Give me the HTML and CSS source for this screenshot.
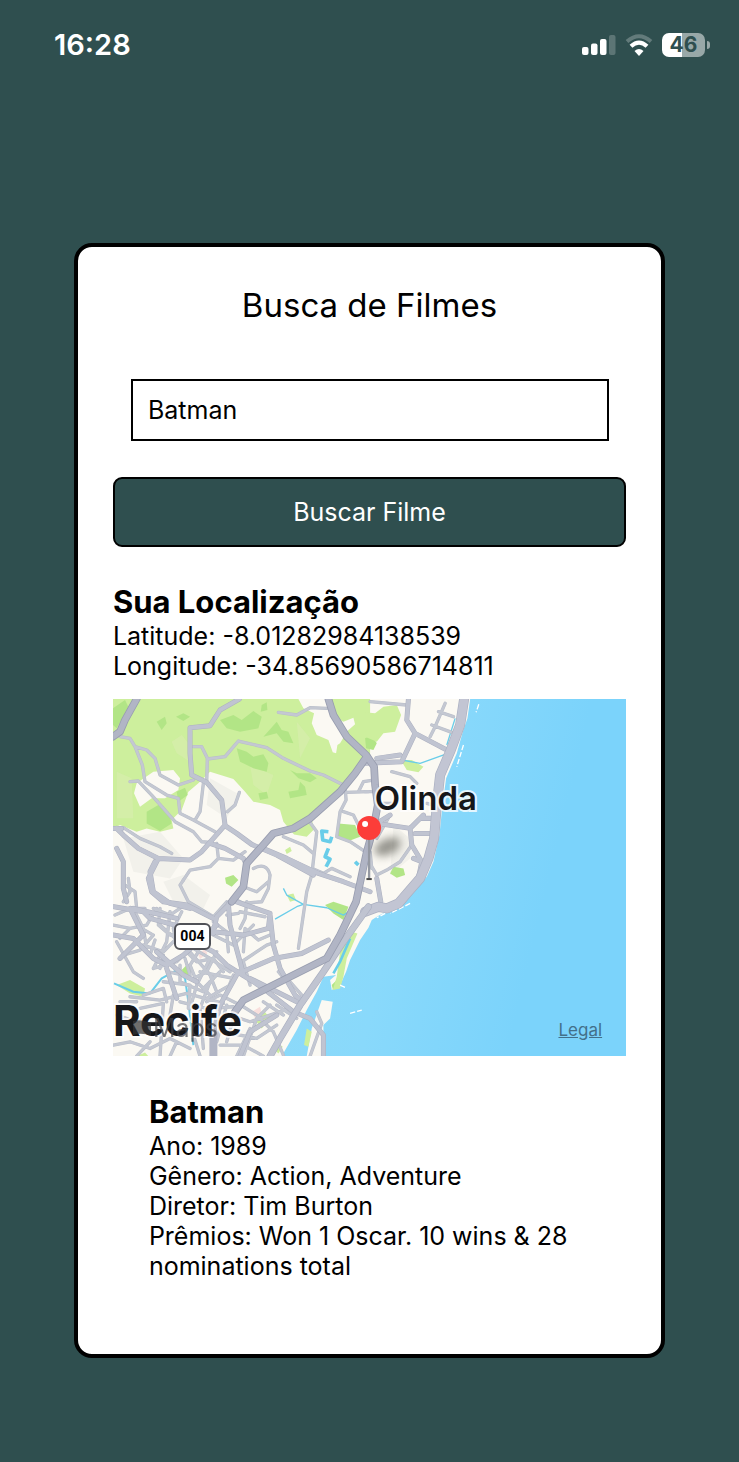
FILE: index.html
```html
<!DOCTYPE html>
<html lang="pt-BR">
<head>
<meta charset="utf-8">
<meta name="viewport" content="width=device-width, initial-scale=1">
<title>Busca de Filmes</title>
<link rel="stylesheet" href="styles.css">
</head>
<body>
<header class="status">
  <span class="clock">16:28</span>
  <div class="indicators">
    <svg class="signal" viewBox="0 0 34 20" aria-hidden="true">
      <rect x="0" y="12" width="6.500" height="8" rx="2" fill="#fff"/>
      <rect x="9" y="8.500" width="6.500" height="11.500" rx="2" fill="#fff"/>
      <rect x="18" y="4" width="6.500" height="16" rx="2" fill="#fff"/>
      <rect x="27" y="0" width="6.500" height="20" rx="2" fill="#fff" opacity=".22"/>
    </svg>
    <svg class="wifi" viewBox="0 0 28 22" aria-hidden="true">
      <path d="M2 7.500Q14-3 26 7.500" fill="none" stroke="#fff" stroke-width="4" opacity=".25"/>
      <path d="M6 12.200Q14 5 22 12.200" fill="none" stroke="#fff" stroke-width="4.200"/>
      <path d="M9.500 17Q14 13 18.500 17L14 22Z" fill="#fff"/>
    </svg>
    <div class="battery"><span class="level">46</span><i class="nub"></i></div>
  </div>
</header>
<main class="card">
  <h1 class="title">Busca de Filmes</h1>
  <form class="search">
    <input class="field" type="text" value="Batman" aria-label="Nome do filme">
    <button class="submit" type="button">Buscar Filme</button>
  </form>
  <section class="location">
    <h2 class="heading">Sua Localização</h2>
    <p>Latitude: -8.01282984138539</p>
    <p>Longitude: -34.85690586714811</p>
  </section>
  <div class="map">
    <svg class="tiles" viewBox="9 12 1539 1071" preserveAspectRatio="xMidYMid slice" aria-hidden="true">
      <defs>
        <linearGradient id="sea" x1="0" y1="0" x2="1" y2=".25">
          <stop offset="0" stop-color="#8fdaf8"/><stop offset=".45" stop-color="#89d9fb"/><stop offset=".85" stop-color="#7bd3fb"/>
        </linearGradient>
        <filter id="soft" x="-50%" y="-50%" width="200%" height="200%"><feGaussianBlur stdDeviation="13"/></filter>
        <g id="minor">
          <path d="M30 125L60 130 75 155 110 165 135 190 150 240 205 270 250 255M75 155L97 210 105 260 170 300 205 310 210 355 250 375 315 410M60 260L85 258 125 300 160 340 195 380 250 410 275 440 300 442"/>
          <path d="M250 155L275 155 292 190 290 260M292 192L345 185 385 138 470 158 520 190 600 228 640 240 700 270M505 52L560 60 600 38 650 40"/>
          <path d="M280 265L270 350 255 375M388 292L375 330 352 350M40 398L90 430 150 455 185 475M320 445L325 490 300 515 240 525 220 555M325 490L370 495 405 470M520 425L580 450 610 475M600 382L620 410 605 540 590 590 565 760M705 275L708 315 690 350 680 425 720 440 765 470M708 292L775 290M745 290L760 260 790 255M700 350L730 360 750 400"/>
          <path d="M605 520L640 535 665 520 720 545M430 520Q470 500 480 540L475 580 455 620 400 625 370 610M220 555L210 570 235 620 310 665 350 620M400 575L440 590 475 560"/>
          <path d="M1005 25L975 95 960 125M965 90L1025 112M985 50L1030 65M780 20L890 30M845 230L900 245 920 265M765 290L800 290M785 520L780 470M800 430L840 360M785 515L800 540 830 525 870 500 905 450M820 325L850 325M950 325L970 330"/>
          <path d="M40 620L60 590 55 550M15 660L60 640 105 640M10 690L60 700 110 690 140 640M40 780L90 765 130 720 95 700M70 640L100 700 110 760M130 640L180 660 210 640M180 650L170 740 130 820M20 740L70 830 100 850M100 750L160 770 200 730M130 820L200 800 260 740M150 690L230 760 310 850M210 810L210 860 280 890 310 850M250 760L300 790 360 830"/>
          <path d="M410 620L405 670 390 700M350 660L385 655M310 680L350 710 355 770M310 720L370 750 430 690M395 800L470 750 500 740M300 790L260 870 240 940M330 830L280 880M370 840L330 940M230 770L260 800 310 790 340 830M270 830L370 850M390 650L465 665"/>
          <path d="M480 930L440 970 400 1083M400 935L440 960 490 1010 520 1080M360 960L420 980 540 940M340 1010L440 1030 500 990M330 1050L400 1050 460 1083M420 1000L380 1083M160 860L240 870 235 940M100 900L160 880 170 920M30 920L80 920M10 1050L60 1040 120 1060 180 1030 240 1060M80 1083L120 1040M180 1083L200 1040M270 1083L250 1020M620 950L635 985 600 1083"/>
          <path d="M80 640L75 590 45 570M150 640L145 690 180 720 230 715M215 650L190 700 200 750M60 700L30 730M135 735L120 780M160 780L150 820M225 790L240 840M175 830L220 840M265 770L240 810 260 860 300 900M320 770L290 830 250 850M300 840L320 890M290 920L330 900 390 930M400 770L405 700 445 735 480 720"/>
          <path d="M60 905L150 915 230 895 340 925M90 940L160 925 150 1083M210 920L290 940 370 935M300 860L270 940 280 1060M360 870L290 910M190 900L180 960M20 960L80 980 140 960M350 930L320 1040M370 970L350 1040M500 930L560 970M460 920L520 960M420 870L400 800M540 860L575 900M505 830L530 860"/>
        </g>
        <g id="medium">
          <path d="M240 100L240 175 245 240 290 262 335 315 345 390 310 430 275 470 240 495 145 490 85 460 40 420 20 400M240 98L300 92 330 45 388 12M345 392L380 415 425 448 500 480 610 540M455 458L530 490 625 535 700 560 780 590M300 445L345 460 400 490 410 510M145 490L115 550 125 590 160 620 230 630 310 670"/>
          <path d="M20 460L40 500 40 580 50 620M135 500L120 530 130 590 180 625 240 640M9 400L35 400M400 575L355 630 320 665 310 710 400 720 475 700 480 655 365 615M355 625L360 690 390 800 400 840M480 660L490 750 510 820 555 900 580 920M655 735L575 775 490 790 385 835"/>
          <path d="M12 635L100 650 120 670 230 700 310 715M60 640L100 720 30 790M70 640L200 670M10 720L70 730 130 790 170 810 220 780 320 690M170 820L200 910M140 770L220 840 260 860M270 750L310 770 350 810 430 860 460 880 550 950 600 970 640 1020 640 1083M385 830L330 930 310 1010"/>
          <path d="M840 360L800 385 900 400 940 360M900 400L905 450 935 500 925 550M915 115L875 200 765 205M895 12L890 75 915 115 1010 165M870 180L800 190M970 370L935 370M915 415L970 415M935 500L910 490M800 550L812 620M500 960L420 1010 390 1083M420 850L560 920"/>
        </g>
        <g id="major">
          <path d="M80 12L45 75 30 110 9 125M770 185L735 235 690 290 600 370 550 400 490 415 455 455 410 505 400 575 365 620"/>
          <path d="M655 12L670 60 710 125 768 180 792 215 795 270 803 330 790 400 770 470 755 540 738 620 690 720 650 790 560 835 400 915 375 950"/>
        </g>
        <path id="shore" d="M1062 12L1050 90 1022 165 990 240 980 330 972 430 955 490 930 550 895 590 865 625 830 640 805 635 765 650"/>
        <path id="avenue" d="M775 635L700 740 640 830 570 930 510 1030 480 1083"/>
      </defs>
      <rect x="9" y="12" width="1539" height="1071" fill="#fbf9f3"/>
      <g fill="#f2f1eb">
        <path d="M40 430L150 410 220 490 180 550 70 530ZM300 250L390 300 350 370 290 330ZM160 560L220 540 300 600 280 640 190 620ZM850 390L900 430 900 490 840 540Z"/>
      </g>
      <path fill="#cdef9d" d="M9 12H780V190L738 220 700 265 660 310 620 345 605 365 610 405 590 425 552 418 520 380 510 345 480 330 430 320 405 290 370 252 300 230 265 265 235 290 215 345 185 375 190 400 150 410 110 400 80 410 30 390 9 400Z"/>
      <path fill="#fbf9f3" d="M565 12H645L670 65 700 80 730 68 735 88 712 108 690 145 682 150 678 175 668 172 655 135 620 120 605 85 612 55 580 40ZM80 265L130 230 190 225 210 250 205 285 165 310 125 310 90 335 72 295Z"/>
      <path fill="#dcedb4" d="M185 140L215 120 235 145 240 200 200 175ZM20 230L65 250 70 370 20 370ZM420 210L490 240 470 300 430 270ZM560 80L600 130 570 190Z" opacity=".5"/>
      <g fill="#b2e586">
        <path d="M9 40L45 15 55 35 20 100 9 90ZM110 350L145 330 175 350 185 385 150 408 110 385ZM200 290L225 278 233 300 205 320ZM330 75L370 60 395 75 430 48 455 65 445 100 390 110 350 100ZM460 125L500 80 515 105 535 110 550 145 520 140 500 115ZM380 160L410 170 430 185 460 178 475 205 470 230 430 220 390 200ZM540 225L560 235 600 235 620 250 600 262 565 250ZM535 290L565 285 570 260 585 275 590 300 540 310ZM140 80L165 65 170 85 155 105ZM198 65L220 55 240 65 220 78ZM455 30L470 22 472 45 452 50ZM685 385L735 390 750 425 710 440 680 420ZM345 548L370 540 385 555 365 575 348 565ZM445 295L470 290 475 310 450 315Z"/>
        <path d="M765 130L785 120 800 145 790 165 768 160ZM840 535L850 515 880 520 885 540 860 548ZM645 630L670 620 715 635 700 675 670 655ZM665 870L680 855 700 875 670 890ZM215 825L230 810 245 830 230 845Z"/>
      </g>
      <g fill="#cdef9d">
        <path d="M765 52L795 55 820 35 860 30 873 60 855 110 820 115 800 140 765 125ZM872 195L905 195 940 215 925 232 890 225ZM525 465L540 455 545 468 530 477ZM530 600L550 595 558 615 540 620ZM20 870L60 855 105 880 100 905 60 895ZM435 975L460 945 480 970 455 1000ZM485 1055L500 1042 518 1055 505 1075ZM80 1083L105 1072 115 1083Z"/>
      </g>
      <path fill="#f9dfdc" d="M265 780L285 760 292 775 270 792ZM425 950L450 935 455 955 435 970Z"/>
      <g fill="none" stroke="#69cde9" stroke-linejoin="round">
        <path stroke-width="11" d="M655 410L635 408 638 435 660 440 665 425M655 460L645 485 660 492 648 515M735 500L745 510"/>
        <path stroke-width="6" d="M12 865L70 890 120 895 155 850 200 825 225 850 235 920 250 1050"/>
        <path stroke-width="4" d="M495 672L560 635 580 628 650 638 700 660 740 635M580 628L530 600 520 580M875 195L930 205 1005 178M1035 70L1010 150"/>
      </g>
      <path fill="url(#sea)" d="M1080 12L1072 70 1058 110 1040 175 1008 250 997 330 988 420 970 500 950 545 895 605 870 625 840 645 805 662 785 675 775 698 750 735 720 795 708 830 690 870 665 885 660 855 678 840 640 845 620 890 590 945 560 1005 515 1083H1548V12Z"/>
      <path fill="#fbf9f3" d="M635 915L668 920 660 970 640 990 640 1083H590L605 1000Z"/>
      <path fill="#cdef9d" d="M690 770L725 710 742 715 710 790 700 845 690 880 668 885 680 845ZM590 1000L605 1010 595 1055 582 1050Z"/>
      <path fill="none" stroke="#69cde9" stroke-width="8" d="M720 730L690 800 670 835"/>
      <path fill="none" stroke="#fff" stroke-width="4" stroke-dasharray="16 6" d="M1106 28L1098 52M1060 150L1040 215M900 625L840 655M845 645L800 668M720 955L755 945M690 870L708 878"/>
      <g fill="none" stroke-linejoin="round" stroke-linecap="round">
        <use href="#minor" stroke="#b8bdc9" stroke-width="10"/>
        <use href="#minor" stroke="#c4c8d2" stroke-width="7"/>
        <use href="#medium" stroke="#adb1c0" stroke-width="15"/>
        <use href="#medium" stroke="#c0c4d1" stroke-width="12"/>
        <use href="#shore" stroke="#abb0c1" stroke-width="30"/>
        <use href="#shore" stroke="#c2c5d3" stroke-width="26"/>
        <use href="#avenue" stroke="#abb0c1" stroke-width="21"/>
        <use href="#avenue" stroke="#c0c4d1" stroke-width="17"/>
        <use href="#major" stroke="#989daf" stroke-width="23"/>
        <use href="#major" stroke="#b1b5c5" stroke-width="18"/>
        <path d="M310 1010V1083" stroke="#b1b5c5" stroke-width="24"/>
      </g>
      <ellipse cx="832" cy="455" rx="42" ry="24" transform="rotate(-25 832 455)" fill="#55554d" opacity=".6" filter="url(#soft)"/>
      <path d="M777 430V552" stroke="#9599a2" stroke-width="7"/>
      <path d="M769 552H785" stroke="#4a4a4a" stroke-width="6"/>
      <circle cx="777" cy="399" r="36" fill="#fc3d39"/>
      <circle cx="765" cy="387" r="9" fill="#fff"/>
    </svg>
    <span class="label olinda">Olinda</span>
    <span class="road">004</span>
    <span class="label recife">Recife</span>
    <span class="brand"><svg class="flag" viewBox="0 0 18 16" aria-hidden="true"><path d="M0 1Q9-1 18 3V16Q9 12 0 15Z" fill="#333"/></svg>Maps</span>
    <a class="legal" href="#">Legal</a>
  </div>
  <section class="result">
    <h2 class="heading">Batman</h2>
    <p>Ano: 1989</p>
    <p>Gênero: Action, Adventure</p>
    <p>Diretor: Tim Burton</p>
    <p>Prêmios: Won 1 Oscar. 10 wins &amp; 28 nominations total</p>
  </section>
</main>
</body>
</html>
```
FILE: styles.css
```css
* { box-sizing: border-box; }
body {
  margin: 0;
  min-height: 100vh;
  background: #2f4f4f;
  color: #000;
  font-family: Inter, "Liberation Sans", sans-serif;
  font-size: 25px;
  line-height: 30px;
}
h1, h2, p { margin: 0; }
.status {
  display: flex;
  justify-content: space-between;
  align-items: center;
  height: 89px;
  padding: 0 30px 0 54px;
  color: #fff;
}
.clock { font-size: 29px; font-weight: 600; }
.indicators { display: flex; align-items: center; gap: 9px; }
.signal { width: 34px; height: 20px; }
.wifi { width: 28px; height: 22px; }
.battery {
  position: relative;
  width: 43px;
  height: 24px;
  margin-right: 4px;
  border-radius: 7px;
  background: linear-gradient(90deg, #fff 46%, #98a8a8 46%);
  color: #2f4f4f;
  text-align: center;
}
.level { display: block; font-size: 21px; line-height: 24px; font-weight: 700; }
.nub {
  position: absolute;
  left: 45px;
  top: 8px;
  width: 3px;
  height: 8px;
  border-radius: 0 4px 4px 0;
  background: #98a8a8;
}
.card {
  width: 80%;
  margin: 154px auto 104px;
  padding: 36px 35px;
  border: 4px solid #000;
  border-radius: 18px;
  background: #fff;
}
.title {
  margin-bottom: 52px;
  font-size: 33px;
  font-weight: 400;
  line-height: 44px;
  text-align: center;
}
.search { display: flex; flex-direction: column; gap: 36px; margin-bottom: 36px; }
.field {
  height: 62px;
  margin: 0 17px 0 18px;
  padding: 0 15px;
  border: 2px solid #000;
  border-radius: 0;
  background: #fff;
  color: #000;
  font: inherit;
}
.submit {
  height: 70px;
  border: 2px solid #000;
  border-radius: 9px;
  background: #2f4f4f;
  color: #fff;
  font: inherit;
}
.heading { font-size: 31px; font-weight: 700; line-height: 38px; }
.map { position: relative; margin-top: 18px; overflow: hidden; }
.tiles { display: block; width: 100%; aspect-ratio: 513 / 357; }
.label {
  position: absolute;
  color: #16171a;
  font-weight: 600;
  -webkit-text-stroke: 4px rgb(255 255 255 / 80%);
  paint-order: stroke fill;
}
.olinda { left: 51%; top: 79px; font-size: 33px; line-height: 40px; }
.recife { left: 0; bottom: 10px; font-size: 42px; line-height: 50px; font-weight: 700; }
.road {
  position: absolute;
  left: 61px;
  top: 224px;
  width: 37px;
  height: 27px;
  border: 2px solid #505157;
  border-radius: 6px;
  background: #fff;
  font: bold 14px/23px Roboto, sans-serif;
  text-align: center;
}
.brand {
  position: absolute;
  left: 20px;
  bottom: 14px;
  display: flex;
  align-items: center;
  gap: 2px;
  color: #3f4045;
  font-size: 25px;
  line-height: 28px;
  opacity: .7;
}
.flag { width: 18px; height: 16px; }
.legal {
  position: absolute;
  right: 24px;
  bottom: 16px;
  color: #43708a;
  font-size: 17px;
  line-height: 20px;
}
.result { padding: 37px 36px; }
```
